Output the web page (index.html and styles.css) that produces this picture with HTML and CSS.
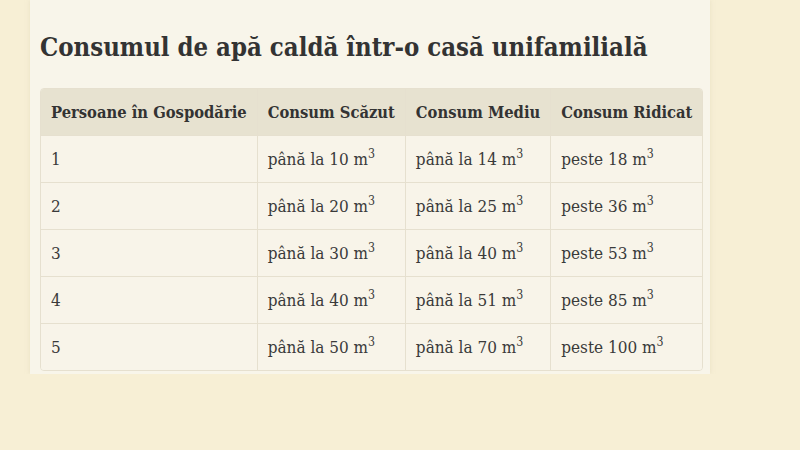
FILE: index.html
```html
<!DOCTYPE html>
<html lang="ro">
<head>
<meta charset="utf-8">
<title>Consumul de apă caldă</title>
<link rel="stylesheet" href="styles.css">
</head>
<body>
<main class="card">
  <h1 class="title">Consumul de apă caldă într-o casă unifamilială</h1>
  <table class="usage">
    <thead>
      <tr>
        <th class="c1">Persoane în Gospodărie</th>
        <th class="c2">Consum Scăzut</th>
        <th class="c3">Consum Mediu</th>
        <th class="c4">Consum Ridicat</th>
      </tr>
    </thead>
    <tbody>
      <tr><td>1</td><td>până la 10 m<sup>3</sup></td><td>până la 14 m<sup>3</sup></td><td>peste 18 m<sup>3</sup></td></tr>
      <tr><td>2</td><td>până la 20 m<sup>3</sup></td><td>până la 25 m<sup>3</sup></td><td>peste 36 m<sup>3</sup></td></tr>
      <tr><td>3</td><td>până la 30 m<sup>3</sup></td><td>până la 40 m<sup>3</sup></td><td>peste 53 m<sup>3</sup></td></tr>
      <tr><td>4</td><td>până la 40 m<sup>3</sup></td><td>până la 51 m<sup>3</sup></td><td>peste 85 m<sup>3</sup></td></tr>
      <tr><td>5</td><td>până la 50 m<sup>3</sup></td><td>până la 70 m<sup>3</sup></td><td>peste 100 m<sup>3</sup></td></tr>
    </tbody>
  </table>
</main>
</body>
</html>
```

FILE: styles.css
```css
html, body {
  margin: 0;
  padding: 0;
  background: #f7efd5;
}
body {
  font-family: "DejaVu Serif Condensed", "DejaVu Serif", serif;
  font-stretch: semi-condensed;
  color: #333;
}
.card {
  margin-left: 30px;
  width: 680px;
  box-sizing: border-box;
  padding: 1px 7px 3px 10px;
  background: #f8f5ea;
  box-shadow: 0 0 4px rgba(220, 210, 180, 0.5);
}
.title {
  margin: 29px 0 24px;
  font-size: 25.5px;
  line-height: 34px;
  font-weight: bold;
  color: #333;
}
.usage {
  width: 663px;
  border-collapse: separate;
  border-spacing: 0;
  border: 1px solid #e6e0cf;
  border-radius: 4px;
  overflow: hidden;
  font-size: 17px;
}
.usage th, .usage td {
  height: 47px;
  box-sizing: border-box;
  padding: 0 10px;
  text-align: left;
  vertical-align: middle;
  border-bottom: 1px solid #e6e0cf;
  border-left: 1px solid #e6e0cf;
  white-space: nowrap;
}
.usage th:first-child, .usage td:first-child {
  border-left: none;
}
.usage tbody tr:last-child td {
  height: 46px;
  border-bottom: none;
}
.usage th {
  background: #e7e2d0;
  font-size: 16.4px;
  font-weight: bold;
  color: #333;
}
.usage td {
  background: #f8f4e9;
  color: #3a3a3a;
}
.usage sup {
  font-size: 0.72em;
  line-height: 0;
}
.c1 { width: 218px; }
.c2 { width: 146px; }
.c3 { width: 145px; }
```
